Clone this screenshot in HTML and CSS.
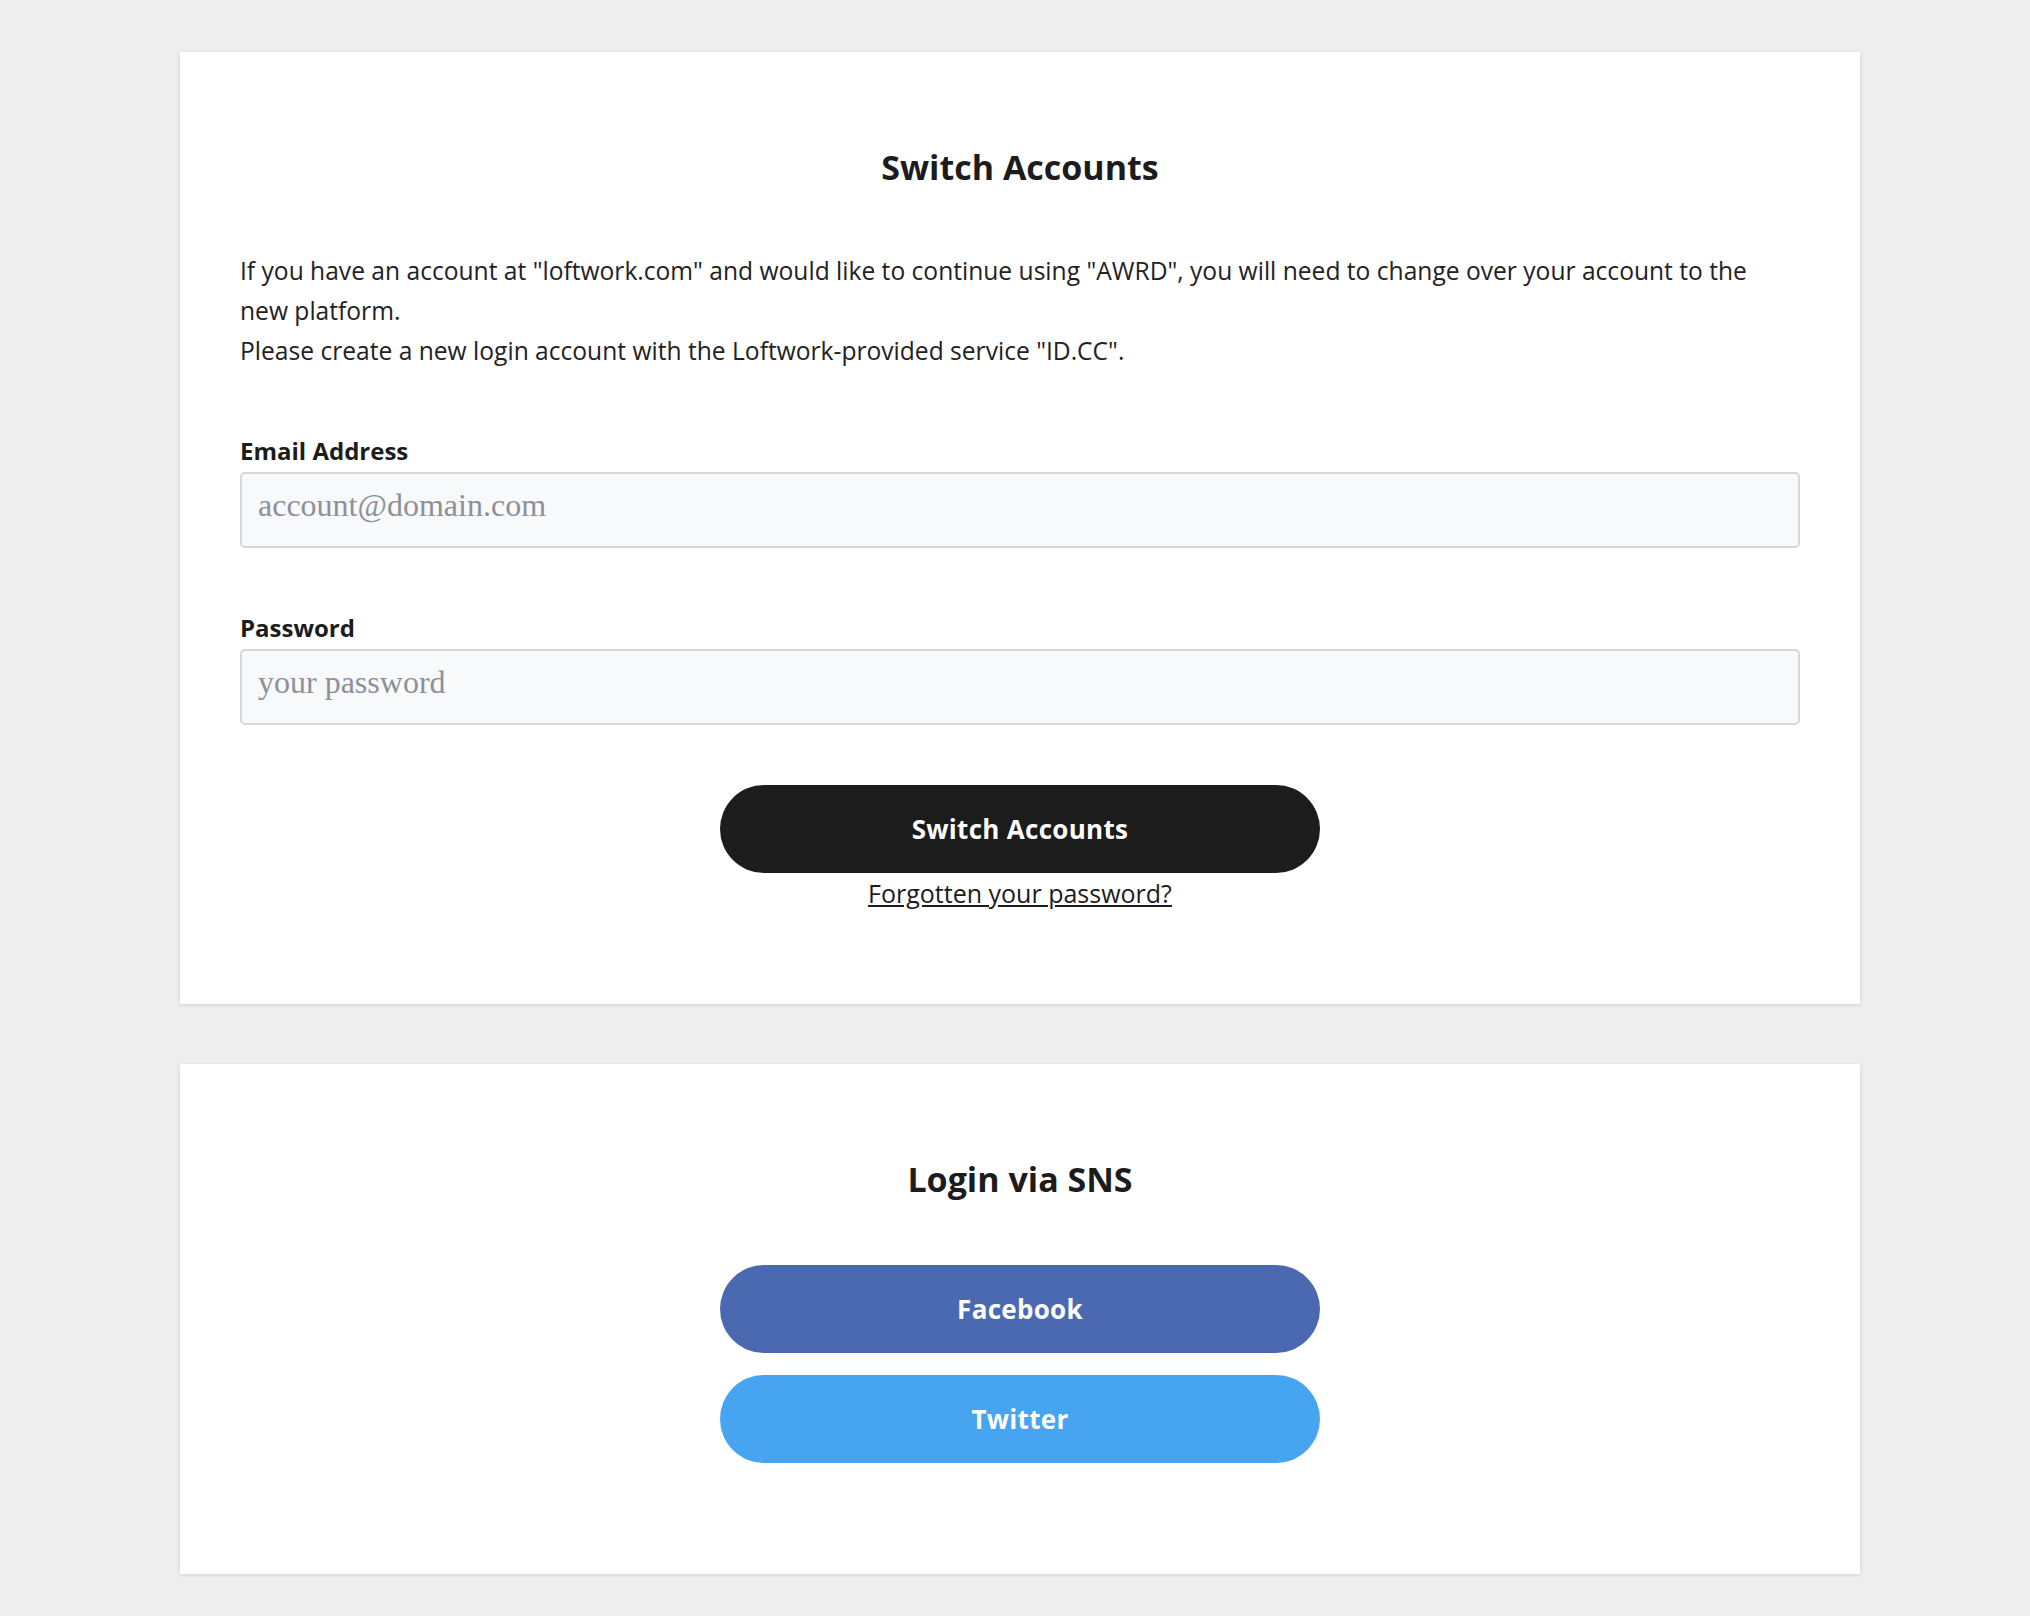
FILE: index.html
```html
<!DOCTYPE html>
<html lang="en">
  <head>
    <meta charset="utf-8">
    <title>Switch Accounts</title>
    <link rel="stylesheet" href="styles.css">
  </head>
  <body>

    <div class="page">
      <div class="card card-switch">
        <h2 class="card-title">Switch Accounts</h2>
        <p class="intro">If you have an account at "loftwork.com" and would like to continue using "AWRD", you will need to change over your account to the new platform.<br>Please create a new login account with the Loftwork-provided service "ID.CC".</p>

        <form class="login-form" onsubmit="return false;">
          <div class="field">
            <label for="email">Email Address</label>
            <input type="text" id="email" name="email" placeholder="account@domain.com">
          </div>
          <div class="field">
            <label for="password">Password</label>
            <input type="password" id="password" name="password" placeholder="your password">
          </div>
          <div class="actions">
            <button type="submit" class="btn btn-dark">Switch Accounts</button>
            <a href="#" class="forgot">Forgotten your password?</a>
          </div>
        </form>
      </div>

      <div class="card card-sns">
        <h2 class="card-title">Login via SNS</h2>
        <div class="sns-list">
          <a href="#" class="btn btn-facebook">Facebook</a>
          <a href="#" class="btn btn-twitter">Twitter</a>
        </div>
      </div>
    </div>

  </body>
</html>
```

FILE: styles.css
```css
body {
  margin: 0;
  background-color: #eeeeee;
  font-family: "Open Sans", "Noto Sans", sans-serif;
  color: #1c1c1c;
}

.page { padding: 52px 0 42px 180px; }

.card {
  width: 1680px;
  box-sizing: border-box;
  background: #fff;
  box-shadow: 0 1px 4px rgba(0, 0, 0, 0.12);
  padding: 94px 60px 96px;
}
.card + .card { margin-top: 60px; }
.card-sns { padding-bottom: 111px; }

.card-title {
  margin: 0;
  font-size: 34px;
  line-height: 42px;
  font-weight: 700;
  text-align: center;
}

.intro {
  margin: 63px 0 0;
  max-width: 1530px;
  font-size: 24.6px;
  line-height: 40px;
  color: #222;
}

.field { margin-top: 65px; }
.field label {
  display: block;
  font-size: 24px;
  line-height: 30px;
  font-weight: 700;
  margin-bottom: 6px;
}
.field input {
  display: block;
  width: 100%;
  height: 76px;
  box-sizing: border-box;
  border: 2px solid #d5d7db;
  border-radius: 5px;
  background: #f8f9fb;
  padding: 0 16px 10px;
  font-family: "Liberation Serif", serif;
  font-size: 32px;
  color: #333;
}
.field input::placeholder { color: #8c9199; }

.actions {
  margin-top: 60px;
  display: flex;
  flex-direction: column;
  align-items: center;
}

.btn {
  display: flex;
  align-items: center;
  justify-content: center;
  width: 600px;
  height: 88px;
  border: 0;
  border-radius: 44px;
  font-family: "Open Sans", "Noto Sans", sans-serif;
  font-size: 26px;
  font-weight: 700;
  letter-spacing: 0.3px;
  color: #fff;
  text-decoration: none;
  cursor: pointer;
}
.btn-dark { background: #1c1c1c; }
.btn-facebook { background: #4b69b1; }
.btn-twitter { background: #47a4f1; }

.forgot {
  margin-top: 5px;
  font-size: 25px;
  line-height: 30px;
  color: #1c1c1c;
  text-decoration: underline;
}

.sns-list {
  margin-top: 65px;
  display: flex;
  flex-direction: column;
  align-items: center;
  gap: 22px;
}
```
